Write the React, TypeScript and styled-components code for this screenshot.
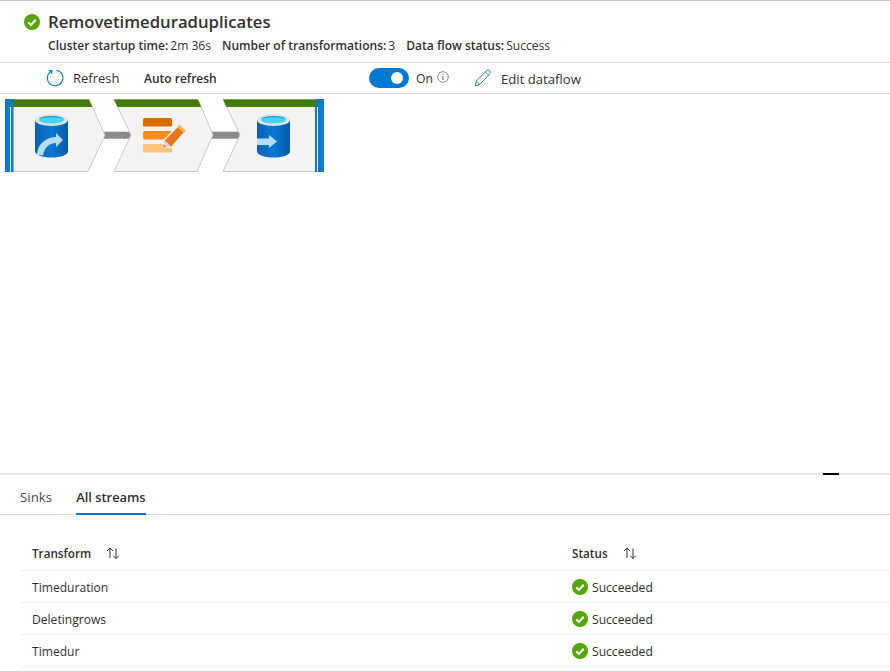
import React from "react";
import styled, { createGlobalStyle } from "styled-components";

const GlobalStyle = createGlobalStyle`
  html, body {
    margin: 0;
    padding: 0;
    background: #fff;
  }
  body {
    font-family: "Open Sans", "Liberation Sans", sans-serif;
    color: #323130;
  }
`;

const Page = styled.div`
  width: 890px;
  height: 671px;
  overflow: hidden;
  display: flex;
  flex-direction: column;
  border-top: 1px solid #c8c8c8;
  box-sizing: border-box;
`;

const Header = styled.header`
  height: 62px;
  box-sizing: border-box;
  padding: 11px 0 0 24px;
  border-bottom: 1px solid #d6d6d6;
`;

const TitleRow = styled.div`
  display: flex;
  align-items: center;
  gap: 8px;
  height: 20px;
`;

const Title = styled.h1`
  margin: 0;
  font-size: 16.7px;
  line-height: 20px;
  font-weight: 600;
  color: #323130;
`;

const Summary = styled.div`
  display: flex;
  margin: 6px 0 0 24px;
  font-size: 12.05px;
  line-height: 16px;
  white-space: nowrap;
`;

const SummaryItem = styled.div`
  display: flex;
  gap: 2px;
  margin-right: 11px;
`;

const SummaryLabel = styled.span`
  font-weight: 600;
`;

const Toolbar = styled.div`
  height: 31px;
  box-sizing: border-box;
  display: flex;
  align-items: center;
  border-bottom: 1px solid #d6d6d6;
  font-size: 13px;
`;

const ToolButton = styled.div<{ $offset: number; $width: number; $gap?: number }>`
  display: flex;
  align-items: center;
  gap: ${(p) => p.$gap ?? 0}px;
  margin-left: ${(p) => p.$offset}px;
  width: ${(p) => p.$width}px;
  white-space: nowrap;
`;

const BoldLabel = styled.span`
  font-size: 12px;
  font-weight: 600;
`;

const EditLabel = styled.span`
  font-size: 13.15px;
  padding-top: 2px;
`;

const Toggle = styled.span`
  position: relative;
  display: block;
  flex: none;
  width: 40px;
  height: 20px;
  border-radius: 10px;
  background: #0078d4;

  &::after {
    content: "";
    position: absolute;
    top: 4px;
    right: 6px;
    width: 12px;
    height: 12px;
    border-radius: 50%;
    background: #fff;
  }
`;

const OnLabel = styled.span`
  font-size: 12.2px;
`;

const InfoWrap = styled.span`
  display: flex;
  margin: 0 0 3px -3px;
`;

const Canvas = styled.main`
  flex: 1;
  padding: 5px 0 0 5px;
`;

const Diagram = styled.svg`
  display: block;
`;

const Splitter = styled.div`
  position: relative;
  height: 2px;
  background: #e6e6e6;

  &::after {
    content: "";
    position: absolute;
    left: 823px;
    top: 0;
    width: 16px;
    height: 2px;
    background: #000;
  }
`;

const Tabs = styled.nav`
  height: 40px;
  box-sizing: border-box;
  display: flex;
  padding-left: 20px;
  gap: 24px;
  border-bottom: 1px solid #dedede;
`;

const Tab = styled.div<{ $active?: boolean }>`
  height: 40px;
  box-sizing: border-box;
  line-height: 45px;
  font-size: ${(p) => (p.$active ? 12.9 : 13.3)}px;
  font-weight: ${(p) => (p.$active ? 600 : 400)};
  color: ${(p) => (p.$active ? "#323130" : "#484644")};
  border-bottom: 2px solid ${(p) => (p.$active ? "#0078d4" : "transparent")};
`;

const Table = styled.div`
  margin: 25px 0 4px 20px;
  font-size: 12.1px;
`;

const Row = styled.div<{ $head?: boolean }>`
  display: grid;
  grid-template-columns: 540px 1fr;
  align-items: center;
  height: ${(p) => (p.$head ? 31 : 32)}px;
  box-sizing: border-box;
  padding-left: 12px;
  padding-bottom: ${(p) => (p.$head ? 4 : 0)}px;
  border-bottom: 1px solid #efefef;
  font-size: ${(p) => (p.$head ? 11.7 : 12.1)}px;
  font-weight: ${(p) => (p.$head ? 600 : 400)};
`;

const HeadCell = styled.div`
  display: flex;
  align-items: center;
  gap: 15px;
`;

const StreamName = styled.div`
  padding-top: 2px;
`;

const StatusCell = styled.div`
  display: flex;
  align-items: center;
  gap: 4px;
`;

const StatusText = styled.span`
  padding-top: 2px;
`;

const CheckIcon = ({ size }: { size: number }) => (
  <svg width={size} height={size} viewBox="0 0 16 16">
    <circle cx="8" cy="8" r="8" fill="#57a300" />
    <path d="M4.2 8.4 L6.9 11 L11.8 5.7" fill="none" stroke="#fff" strokeWidth="2" />
  </svg>
);

const SortIcon = () => (
  <svg width="15" height="12" viewBox="0 0 15 12">
    <path
      d="M4 11V1M1 4l3-3 3 3M10 1.500v10M7.200 8.700l2.800 2.800 2.800-2.800"
      fill="none"
      stroke="#323130"
      strokeWidth="1"
    />
  </svg>
);

const RefreshIcon = () => (
  <svg width="18" height="18" viewBox="0 0 18 18">
    <path
      d="M5.600 1.900A7.800 7.800 0 1 0 10.500 1.200"
      fill="none"
      stroke="#0078d4"
      strokeWidth="1.100"
    />
    <path d="M2.600 1.200 L6 1.700 L5.600 5" fill="none" stroke="#0078d4" strokeWidth="1.100" />
  </svg>
);

const PencilIcon = () => (
  <svg width="18" height="18" viewBox="0 0 18 18">
    <path
      d="M1.200 16.800 L2.400 12 L12.800 1.600 Q14 .8 15.400 1.800 Q16.800 3.200 16 4.600 L5.800 15.400 Z M11.400 3 L14.800 6.200 M2.400 12 L5.800 15.400"
      fill="none"
      stroke="#2b7cd3"
      strokeWidth="1"
    />
  </svg>
);

const InfoIcon = () => (
  <svg width="12" height="12" viewBox="0 0 12 12">
    <circle cx="6" cy="6" r="5.300" fill="none" stroke="#6b6967" strokeWidth=".8" />
    <path d="M6 2.800v1.100M6 5v4" stroke="#8a4a44" strokeWidth="1" />
  </svg>
);

// node outlines are in diagram coordinates, the svg starts at x=5, y=99 of the page
const NODE_TOP = 0.5;
const NODE_BOTTOM = 72.5;
const NODE_MID = 36;

const leftEnd = `M0.5 ${NODE_TOP} H84 L100 ${NODE_MID} L83 ${NODE_BOTTOM} H0.5 Z`;
const midNode = `M109 ${NODE_TOP} H193 L208 ${NODE_MID} L192 ${NODE_BOTTOM} H109 L126 ${NODE_MID} Z`;
const rightEnd = `M218 ${NODE_TOP} H318.5 V${NODE_BOTTOM} H218 L235 ${NODE_MID} Z`;

const Cylinder = ({ x, gradientId }: { x: number; gradientId: string }) => (
  <g transform={`translate(${x} 15)`}>
    <path
      d="M0 6 V37 C0 41 7 43.500 16.500 43.500 S33 41 33 37 V6 Z"
      fill={`url(#${gradientId})`}
    />
    <ellipse cx="16.500" cy="6" rx="16.500" ry="6" fill="#dfe3e6" />
    <ellipse cx="16.500" cy="5.800" rx="12.500" ry="3.800" fill="#46d6f2" />
    <path d="M4 5.800 A12.500 3.800 0 0 1 29 5.800 A12.500 2.600 0 0 0 4 5.800 Z" fill="#1a9fd8" />
  </g>
);

const PipelineDiagram = () => (
  <Diagram width="322" height="76" viewBox="0 0 322 76">
    <defs>
      <linearGradient id="dbBlue" x1="0" x2="1" y1="0" y2="0">
        <stop offset="0" stopColor="#0a5fb0" />
        <stop offset=".5" stopColor="#0a78d4" />
        <stop offset="1" stopColor="#0759a6" />
      </linearGradient>
      <clipPath id="leftClip">
        <path d={leftEnd} />
      </clipPath>
      <clipPath id="midClip">
        <path d={midNode} />
      </clipPath>
      <clipPath id="rightClip">
        <path d={rightEnd} />
      </clipPath>
    </defs>

    <rect x="99" y="32.700" width="28" height="7" fill="#8a8a8a" />
    <rect x="207" y="32.700" width="29" height="7" fill="#8a8a8a" />

    <path d={leftEnd} fill="#f3f3f3" stroke="#c8c8c8" />
    <path d={midNode} fill="#f3f3f3" stroke="#c8c8c8" />
    <path d={rightEnd} fill="#f3f3f3" stroke="#c8c8c8" />

    <rect x="0" y="0" width="110" height="8" fill="#457a00" clipPath="url(#leftClip)" />
    <rect x="105" y="0" width="110" height="8" fill="#457a00" clipPath="url(#midClip)" />
    <rect x="215" y="0" width="110" height="8" fill="#457a00" clipPath="url(#rightClip)" />

    <rect x="0" y="0" width="5" height="73" fill="#0a7ad6" />
    <rect x="6" y="0" width="2.500" height="73" fill="#0a7ad6" />
    <rect x="310" y="0" width="2" height="73" fill="#0a7ad6" />
    <rect x="313" y="0" width="6" height="73" fill="#0a7ad6" />

    <Cylinder x={30} gradientId="dbBlue" />
    <path
      d="M32 56 C32 46 40 38.500 51 38 V34 L58 41 L51 48 V44 C44 44 39 49 38 56.500 Z"
      fill="#b5dcf5"
    />

    <rect x="138" y="19" width="29" height="8.500" rx="1.500" fill="#d96a00" />
    <rect x="138" y="32" width="29" height="8.500" rx="1.500" fill="#fa8c1e" />
    <rect x="138" y="45" width="29" height="8.500" rx="1.500" fill="#ffc27a" />
    <path
      d="M174.300 25.700 L181 31.700 L166.700 48.300 L158.300 48.300 L159.300 40.700 Z"
      fill="#e8761a"
      stroke="#f3f3f3"
      strokeWidth="1.500"
      strokeLinejoin="round"
    />
    <path d="M174.300 25.700 L181 31.700 L179 34 L172.300 28 Z" fill="#f6b55f" />
    <path d="M159.300 40.700 L166.700 48.300 L158.300 48.300 Z" fill="#d8d8d8" />
    <path d="M158.300 48.300 L161 48.300 L158.700 45.500 Z" fill="#d96a00" />

    <Cylinder x={252} gradientId="dbBlue" />
    <path d="M252 39.500 H264 V36 L272 42.500 L264 49 V46 H252 Z" fill="#b5dcf5" />
  </Diagram>
);

const streams = ["Timeduration", "Deletingrows", "Timedur"];

export default function App() {
  return (
    <Page>
      <GlobalStyle />
      <Header>
        <TitleRow>
          <CheckIcon size={16} />
          <Title>Removetimeduraduplicates</Title>
        </TitleRow>
        <Summary>
          <SummaryItem>
            <SummaryLabel>Cluster startup time:</SummaryLabel>
            <span>2m 36s</span>
          </SummaryItem>
          <SummaryItem>
            <SummaryLabel>Number of transformations:</SummaryLabel>
            <span>3</span>
          </SummaryItem>
          <SummaryItem>
            <SummaryLabel>Data flow status:</SummaryLabel>
            <span>Success</span>
          </SummaryItem>
        </Summary>
      </Header>
      <Toolbar>
        <ToolButton $offset={46} $width={98} $gap={9}>
          <RefreshIcon />
          <span>Refresh</span>
        </ToolButton>
        <ToolButton $offset={0} $width={225}>
          <BoldLabel>Auto refresh</BoldLabel>
        </ToolButton>
        <ToolButton $offset={0} $width={105} $gap={7}>
          <Toggle />
          <OnLabel>On</OnLabel>
          <InfoWrap>
            <InfoIcon />
          </InfoWrap>
        </ToolButton>
        <ToolButton $offset={0} $width={120} $gap={9}>
          <PencilIcon />
          <EditLabel>Edit dataflow</EditLabel>
        </ToolButton>
      </Toolbar>
      <Canvas>
        <PipelineDiagram />
      </Canvas>
      <Splitter />
      <Tabs>
        <Tab>Sinks</Tab>
        <Tab $active>All streams</Tab>
      </Tabs>
      <Table>
        <Row $head>
          <HeadCell>
            Transform <SortIcon />
          </HeadCell>
          <HeadCell>
            Status <SortIcon />
          </HeadCell>
        </Row>
        {streams.map((name) => (
          <Row key={name}>
            <StreamName>{name}</StreamName>
            <StatusCell>
              <CheckIcon size={16} />
              <StatusText>Succeeded</StatusText>
            </StatusCell>
          </Row>
        ))}
      </Table>
    </Page>
  );
}
